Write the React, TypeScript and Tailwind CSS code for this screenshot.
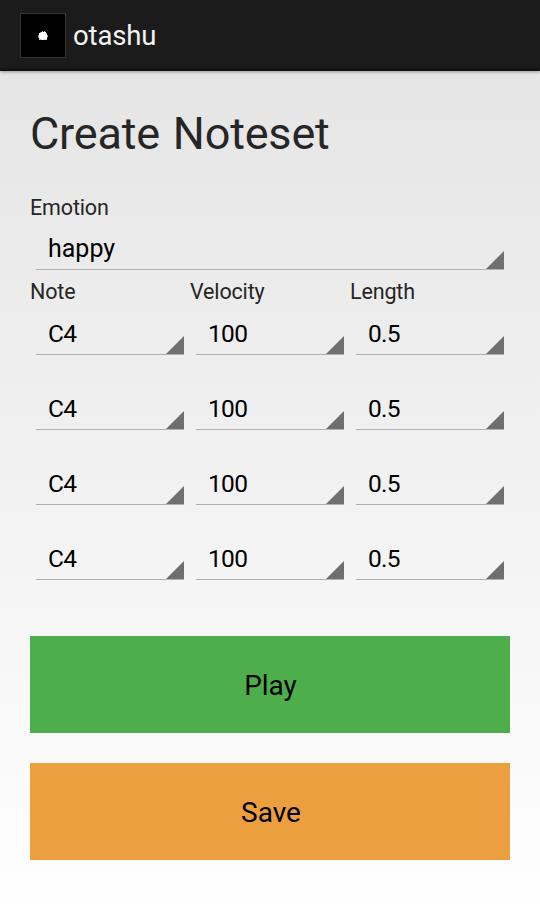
const label = "text-[21.5px] leading-[30px] tracking-[-0.15px] text-[#262626]";

function Spinner({ value, wide = false, className = "" }: { value: string; wide?: boolean; className?: string }) {
  const text = wide ? "text-[25px]" : "text-[24.5px] tracking-[-0.7px]";
  return (
    <div className={`px-1.5 ${className}`}>
      <div className={`relative h-[39px] border-b border-[#b0b0b0] pl-3 leading-[36px] text-black ${text}`}>
        {value}
        <svg className="absolute right-0 bottom-0" width="18" height="18" viewBox="0 0 18 18">
          <path d="M18 0V18H0Z" fill="#6f6f6f" />
        </svg>
      </div>
    </div>
  );
}

export default function App() {
  return (
    <div className="flex h-[921px] w-[540px] flex-col bg-linear-to-b from-[#e3e3e3] to-white font-[Roboto,sans-serif]">
      <header className="flex h-[71px] shrink-0 items-center border-b-3 border-[#141414] bg-[#1b1b1b] pt-[3px] pl-5 shadow-[0_1px_3px_rgba(0,0,0,0.35)]">
        <div className="flex h-[45px] w-[46px] items-center justify-center border border-[#333] bg-black">
          <svg width="10" height="10" viewBox="0 0 10 10">
            <path d="M1 2H2.5V1H4V.3H5V1H6V.3H7V1H8V2.5H9V4H9.6V6.5H9V9H7.5V8.4H6.5V9H3.5V8.4H2.5V9H1.2V7H.5V3.5H1Z" fill="white" />
          </svg>
        </div>
        <span className="ml-[7px] text-[27.5px] leading-[32px] tracking-[-0.15px] text-[#f3f3f3]">otashu</span>
      </header>
      <main className="px-[30px]">
        <h1 className="mt-[33px] h-[59px] text-[45px] leading-[60px] tracking-[-0.2px] [word-spacing:2px] text-[#262626]">Create Noteset</h1>
        <div className={`mt-[30px] h-[30px] ${label}`}>Emotion</div>
        <Spinner value="happy" wide className="mt-[8px]" />
        <div className={`mt-[7px] grid h-[30px] grid-cols-3 ${label}`}>
          <span>Note</span><span>Velocity</span><span>Length</span>
        </div>
        <div className="mt-[9px] flex flex-col gap-9">
          {[0, 1, 2, 3].map((row) => (
            <div key={row} className="grid grid-cols-3">
              <Spinner value="C4" /><Spinner value="100" /><Spinner value="0.5" />
            </div>
          ))}
        </div>
        <button className="mt-[56px] block h-[97px] w-full bg-[#4eae4c] pt-[3px] pl-px text-[28px] text-black">Play</button>
        <button className="mt-[30px] block h-[97px] w-full bg-[#eb9f3f] pt-[3px] pl-[2px] text-[28px] text-black">Save</button>
      </main>
    </div>
  );
}
